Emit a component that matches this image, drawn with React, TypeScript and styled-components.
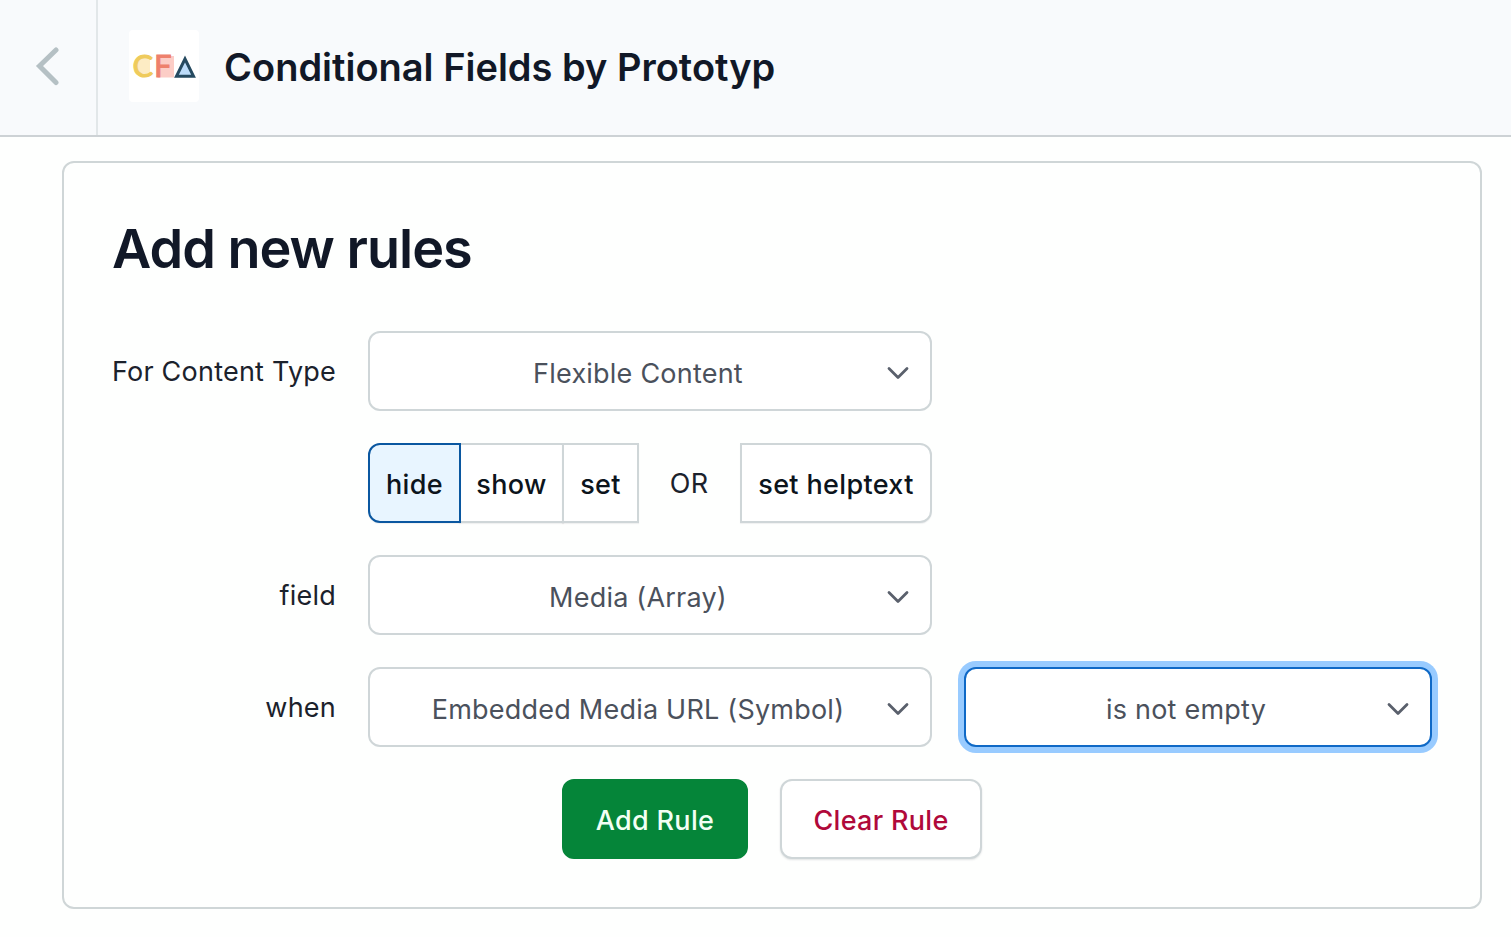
import React from "react";
import styled, { createGlobalStyle, css } from "styled-components";

const GlobalStyle = createGlobalStyle`
  *, *::before, *::after { box-sizing: border-box; }
  body {
    margin: 0;
    background: #fefffe;
    color: #1b222c;
    font-family: Inter, "Liberation Sans", sans-serif;
    font-size: 27px;
    line-height: 40px;
    letter-spacing: 0.22px;
  }
`;

const Page = styled.div`
  display: flex;
  flex-direction: column;
  height: 937px;
  background: #fefffe;
`;

const Header = styled.header`
  display: flex;
  align-items: center;
  height: 137px;
  border-bottom: 2px solid #cdd2d5;
  background: #f8fafc;
`;

const BackButton = styled.button`
  display: flex;
  align-items: center;
  align-self: stretch;
  width: 98px;
  padding: 0 0 3px 34px;
  border: 0;
  border-right: 2px solid #e2e7e9;
  background: transparent;
`;

const AppIcon = styled.div`
  display: flex;
  width: 70px;
  height: 72px;
  margin: 0 25px 4px 31px;
  border-radius: 4px;
  background: #fff;
`;

const AppTitle = styled.h1`
  margin: 0 0 2px;
  color: #111827;
  font-size: 38px;
  font-weight: 600;
  line-height: 48px;
  letter-spacing: 0;
  white-space: nowrap;
`;

const Card = styled.main`
  width: 1420px;
  height: 748px;
  margin: 24px 0 0 62px;
  padding: 54px 42px 0 48px;
  border: 2px solid #cfd6d7;
  border-radius: 12px;
`;

const CardTitle = styled.h2`
  margin: 0 0 50px;
  color: #111827;
  font-size: 54px;
  font-weight: 600;
  line-height: 64px;
  letter-spacing: -1px;
  white-space: nowrap;
`;

const Form = styled.div`
  display: grid;
  grid-template-columns: 224px 564px 468px;
  grid-auto-rows: 80px;
  gap: 32px;
  align-items: center;
`;

const Label = styled.label`
  grid-column: 1;
  justify-self: end;
  padding-top: 1px;
  white-space: nowrap;
`;

const SelectBox = styled.div<{ $focused?: boolean }>`
  display: flex;
  align-items: center;
  height: 80px;
  padding: 4px 20px 0 20px;
  border: 2px solid #cfd6d8;
  border-radius: 12px;
  background: #fff;
  color: #4b515c;
  ${(p) =>
    p.$focused &&
    css`
      border-color: #0f69c6;
      box-shadow: 0 0 0 6px #98cbff;
    `}
`;

const SelectValue = styled.span`
  flex: 1;
  padding-top: 1px;
  text-align: center;
  white-space: nowrap;
`;

const ActionRow = styled.div`
  grid-column: 2;
  display: flex;
  height: 80px;
`;

const Segment = styled.button<{ $width: number; $active?: boolean; $edge?: "left" | "right" }>`
  position: relative;
  width: ${(p) => p.$width}px;
  padding: 3px 0 0;
  border: 2px solid #cfd6d8;
  border-radius: ${(p) => (p.$edge === "left" ? "12px 0 0 12px" : p.$edge === "right" ? "0 12px 12px 0" : "0")};
  background: #fff;
  box-shadow: 0 1px 1px rgba(17, 24, 39, 0.06);
  color: #0c141c;
  font: 500 27px/40px Inter, "Liberation Sans", sans-serif;
  letter-spacing: 0.35px;
  white-space: nowrap;
  & + & { margin-left: -2px; }
  ${(p) =>
    p.$active &&
    css`
      z-index: 1;
      border-color: #0a57a0;
      background: #e8f5ff;
    `}
`;

const Or = styled.span`
  flex: 1;
  align-self: center;
  padding: 1px 1px 0 0;
  text-align: center;
`;

const Buttons = styled.div`
  display: flex;
  justify-content: center;
  gap: 32px;
  margin: 32px 0 0 2px;
  padding-right: 8px;
`;

const Button = styled.button<{ $width: number; $primary?: boolean }>`
  width: ${(p) => p.$width}px;
  height: 80px;
  padding: 3px 0 0;
  border: 2px solid ${(p) => (p.$primary ? "#058539" : "#cfd6d8")};
  border-radius: 12px;
  background: ${(p) => (p.$primary ? "#058539" : "#fff")};
  box-shadow: ${(p) => (p.$primary ? "none" : "0 1px 2px rgba(17, 24, 39, 0.12)")};
  color: ${(p) => (p.$primary ? "#f2fff4" : "#b0093a")};
  font: 500 27px/40px Inter, "Liberation Sans", sans-serif;
  letter-spacing: 0.3px;
  white-space: nowrap;
`;

const ChevronDown = () => (
  <svg width="24" height="16" viewBox="0 0 24 16" fill="none" stroke="#5a606c" strokeWidth="2.8" strokeLinecap="round" strokeLinejoin="round">
    <path d="M3 3.5 12 12.5 21 3.5" />
  </svg>
);

function Select({ value, focused }: { value: string; focused?: boolean }) {
  return (
    <SelectBox $focused={focused}>
      <SelectValue>{value}</SelectValue>
      <ChevronDown />
    </SelectBox>
  );
}

const LogoLetter = styled.text`
  font: 400 31px Lato, sans-serif;
  letter-spacing: 0;
  stroke-width: 1;
`;

const Logo = () => (
  <svg width="70" height="72" viewBox="0 0 70 72">
    <path d="M21 28.5A9.5 9.5 0 1 0 21 44.500Z" fill="#fdecc4" />
    <LogoLetter x="3.500" y="47.200" fill="#efcb5c" stroke="#efcb5c">C</LogoLetter>
    <rect x="29" y="26" width="16" height="21.500" fill="#fccdc6" />
    <LogoLetter x="25" y="47.200" fill="#ee806c" stroke="#ee806c">F</LogoLetter>
    <path d="M56 29 64.500 46.200H47.500Z" fill="#bddcfa" stroke="#264a60" strokeWidth="3" />
  </svg>
);

export default function App() {
  return (
    <Page>
      <GlobalStyle />
      <Header>
        <BackButton aria-label="Back">
          <svg width="26" height="40" viewBox="0 0 26 40" fill="none" stroke="#b5c0c4" strokeWidth="5" strokeLinecap="round" strokeLinejoin="miter">
            <path d="M22 4 5.500 20 22 36.500" />
          </svg>
        </BackButton>
        <AppIcon><Logo /></AppIcon>
        <AppTitle>Conditional Fields by Prototyp</AppTitle>
      </Header>
      <Card>
        <CardTitle>Add new rules</CardTitle>
        <Form>
          <Label>For Content Type</Label>
          <Select value="Flexible Content" />
          <ActionRow>
            <Segment $width={93} $active $edge="left">hide</Segment>
            <Segment $width={105}>show</Segment>
            <Segment $width={77}>set</Segment>
            <Or>OR</Or>
            <Segment $width={192} $edge="right">set helptext</Segment>
          </ActionRow>
          <Label>field</Label>
          <Select value="Media (Array)" />
          <Label>when</Label>
          <Select value="Embedded Media URL (Symbol)" />
          <Select value="is not empty" focused />
        </Form>
        <Buttons>
          <Button $width={186} $primary>Add Rule</Button>
          <Button $width={202}>Clear Rule</Button>
        </Buttons>
      </Card>
    </Page>
  );
}
